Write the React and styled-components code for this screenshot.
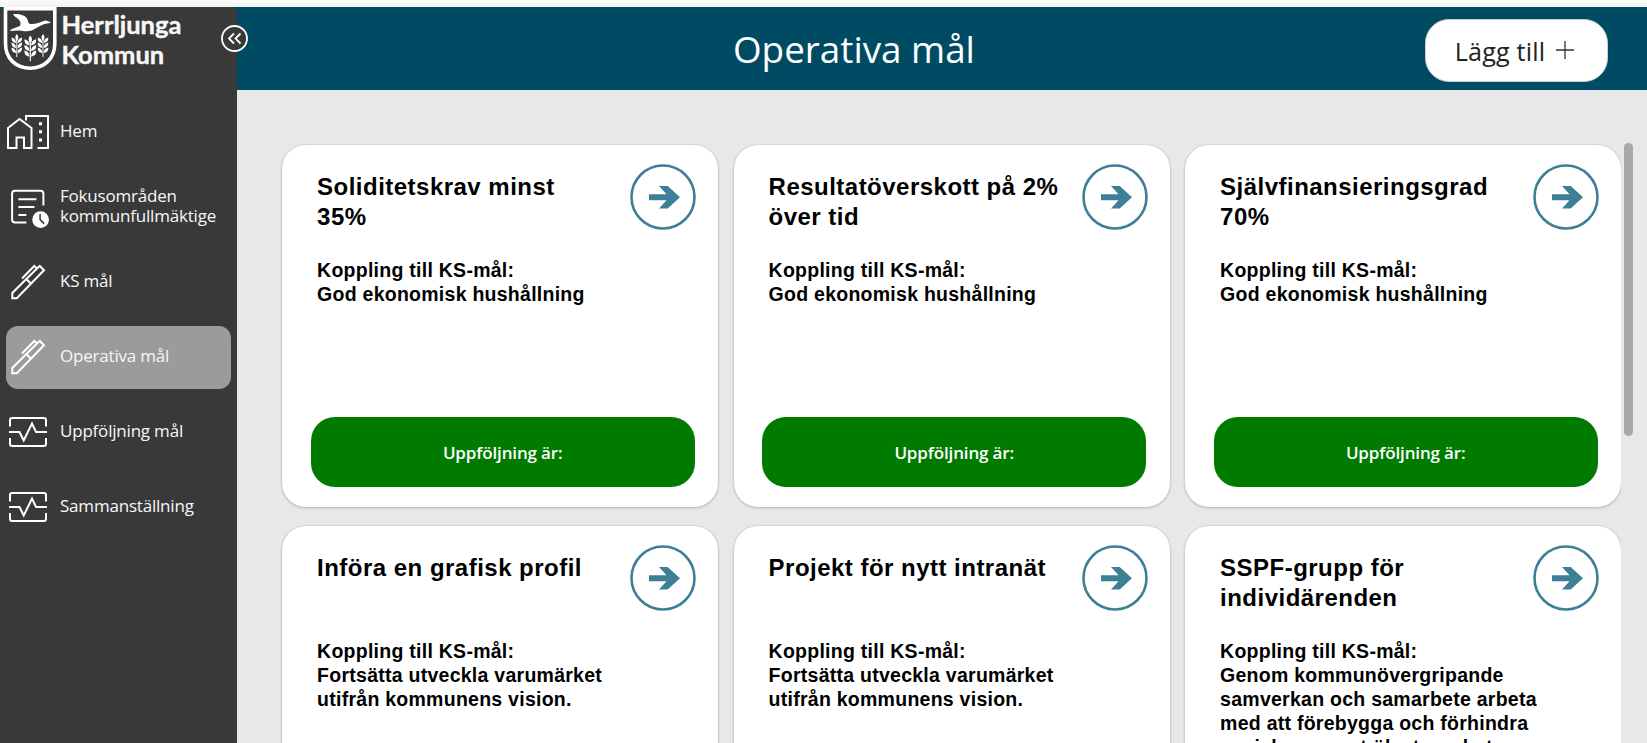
import React from "react";
import styled, { createGlobalStyle } from "styled-components";

const Global = createGlobalStyle`
  * { box-sizing: border-box; }
  html, body { margin: 0; padding: 0; overflow: hidden; }
`;
const Page = styled.div`
  width: 100vw; height: 100vh; overflow: hidden;
  display: flex; flex-direction: column;
  font-family: "Open Sans", sans-serif; background: #e8e8e8;
`;
const TopStrip = styled.div`
  height: 7px; flex: none; background: linear-gradient(#fafafa, #f3f3f3);
`;
const Body = styled.div`
  flex: 1; min-height: 0; display: flex;
  background: linear-gradient(#004b64 0 83px, #e8e8e8 83px);
`;
const Sidebar = styled.aside`
  position: relative; width: 237px; flex: none; background: #393939;
  border-radius: 6px 6px 0 0; color: #fff; display: flex; flex-direction: column;
`;
const Brand = styled.div`
  display: flex; height: 94px; padding-left: 3px; gap: 4.5px;
  svg { flex: none; }
`;
const BrandName = styled.div`
  font: 700 25.5px/30px Lato, sans-serif; padding-top: 2px; color: #f7f7f7; white-space: nowrap;
  -webkit-text-stroke: 0.4px #f7f7f7;
`;
const Collapse = styled.button`
  position: absolute; left: 221px; top: 18px; width: 27px; height: 27px; padding: 0;
  border: 0; background: none; display: block;
`;
const Nav = styled.nav`
  display: flex; flex-direction: column; gap: 12px; padding: 0 6px;
`;
const NavItem = styled.a`
  height: 63px; border-radius: 12px; display: flex; align-items: center;
  background: ${(p) => (p.$active ? "#9b9b9b" : "transparent")};
  color: #f7f7f7; font-size: 17px; line-height: 20px; letter-spacing: -0.2px;
  svg { flex: none; width: 54px; height: 63px; }
  span { padding-bottom: 3px; }
`;
const Main = styled.main`flex: 1; min-width: 0; display: flex; flex-direction: column;`;
const Header = styled.header`
  height: 83px; flex: none; padding: 0 39px 0 45px;
  display: flex; align-items: center; justify-content: space-between;
`;
const Title = styled.h1`
  margin: 0 0 0 451px; color: #fff; font-weight: 400; font-size: 36.8px; line-height: 50px;
`;
const AddButton = styled.button`
  width: 183px; height: 63px; border-radius: 24px; border: 1px solid #ccc;
  background: #fff; color: #222; font: 400 25.2px/32px "Open Sans", sans-serif; white-space: nowrap;
  display: flex; align-items: center; justify-content: center; gap: 10px; padding: 0 3px 0 0; margin-top: 3px;
  span { padding-top: 2px; letter-spacing: 0.15px; }
`;
const Content = styled.section`
  flex: 1; min-height: 0; display: flex; padding: 53px 14px 0 45px; gap: 3px;
`;
const Gallery = styled.div`
  flex: none; width: 1339px; overflow: hidden; padding-top: 2px;
  margin-left: -2px; padding-left: 2px; box-sizing: content-box;
  display: grid; grid-template-columns: repeat(3, 436px); column-gap: 15.5px; row-gap: 19px;
  grid-auto-rows: 362px;
`;
const ScrollThumb = styled.div`
  width: 9px; height: 293px; border-radius: 5px; background: #a9a9a9;
`;
const Card = styled.article`
  background: #fff; border-radius: 24px; padding: 19px 22px 19px 28.7px; overflow: hidden;
  box-shadow: 0 0 2px rgba(0,0,0,.15), 0 1px 3px rgba(0,0,0,.2);
  display: flex; flex-direction: column;
  font-family: "Liberation Sans", Arial, sans-serif; color: #000;
`;
const CardTop = styled.div`
  display: flex; justify-content: space-between; height: 92px; padding-left: 6.4px;
  svg { flex: none; }
`;
const CardTitle = styled.h2`
  margin: 0; padding-top: 8px; width: 300px; font-size: 24px; line-height: 30px; font-weight: 700;
  letter-spacing: 0.48px; white-space: pre-line;
`;
const CardText = styled.p`
  margin: 0; padding: 2px 0 0 6.4px; height: 161px; font-size: 19.5px; line-height: 24px; font-weight: 700;
  white-space: pre-line; letter-spacing: 0.26px;
`;
const Status = styled.div`
  height: 70px; flex: none; width: 384px; border-radius: 24px; background: #007b00; color: #fff;
  display: flex; align-items: center; justify-content: center; padding-top: 2px;
  font: 600 17px/24px "Open Sans", sans-serif; letter-spacing: -0.15px;
`;

const Sprig = ({ x, y }) => (
  <g transform={`translate(${x} ${y})`} fill="#fff">
    <path d="M0 -1 C2 1 2 4 0 6 C-2 4 -2 1 0 -1Z" />
    {[4, 9, 14].map((t) => (
      <g key={t}>
        <path d={`M-.7 ${t + 4} C-4.5 ${t + 3.5} -5.5 ${t + 1} -5.2 ${t - 1.5} C-2.5 ${t - 1} -.7 ${t + 1} -.7 ${t + 4}Z`} />
        <path d={`M.7 ${t + 4} C4.5 ${t + 3.5} 5.5 ${t + 1} 5.2 ${t - 1.5} C2.5 ${t - 1} .7 ${t + 1} .7 ${t + 4}Z`} />
      </g>
    ))}
    <rect x="-.5" y="5" width="1" height="17" />
  </g>
);
const Shield = () => (
  <svg width="54" height="64" viewBox="3 7 54 64">
    <path d="M5.5 8.7 H54.8 V43.5 C54.8 59 44 68.2 30.2 68.2 C16.3 68.2 5.5 59 5.5 43.5Z" fill="none" stroke="#fff" strokeWidth="3.6" />
    <path d="M13 14.2 C18 13.3 25 15 27 18.5 C28.5 21 27.5 23.3 30.5 24 C35 24.5 40 22 44.5 20.7 C46.5 20 48.5 21.5 51 22.6 C48 24 46.2 23.5 44.5 24 C38 26 34 31.2 26.5 31.3 C23.5 31.5 22 30.3 19 30.5 L9.5 31 C12 28.4 15.5 28 19.5 26.3 C21.5 24.5 20.5 21.7 18.5 19.3 C16.5 17.3 14 16.7 13 14.2Z" fill="#fff" />
    <Sprig x={16.8} y={35} /><Sprig x={43} y={35} />
    <g transform="translate(30.3 36) scale(1.12) translate(-30.3 -36)"><Sprig x={30.3} y={36.5} /></g>
  </svg>
);
const icons = {
  home: <g transform="translate(0 -3)">
    <path d="M2 30 L13.5 21 L25.5 30 V50 H18 V39.5 H10.5 V50 H2Z" />
    <path d="M20 22.5 V18 H42 V50 H31.5" />
    <path d="M33 25.8 h3 M33 33.7 h3 M33 42 h3" strokeWidth="3" />
  </g>,
  focus: <g transform="translate(-0.6 -1.4)">
    <path d="M21 48 H9.5 Q6.7 48 6.7 45 V19 Q6.7 16.2 9.5 16.2 H35 Q38 16.2 38 19 V31" />
    <path d="M13 24.6 H31 M13 32.3 H29 M13 40.3 H21" />
    <circle cx="35.2" cy="45" r="8.4" fill="#fff" stroke="none" />
    <path d="M34.7 39.5 V45 L38.7 49" stroke="#393939" strokeWidth="1.5" />
  </g>,
  pen: <>
    <path d="M6.3 47.3 V42 L31 17.5 L33.8 15 L38 19.3 L10.8 47.3Z" />
    <path d="M16 27.5 L28.3 15 L31.2 17.8 M20.8 28.5 L25 32.7" />
  </>,
  pulse: <g transform="translate(0 -1)">
    <path d="M4 26.5 V20 Q4 18 6 18 H38 Q40 18 40 20 V26.5 M4 38 V44 Q4 46 6 46 H38 Q40 46 40 44 V38" />
    <path d="M3 32 H13.5 L17.7 40.5 L26 23.5 L30 32 H41" />
  </g>,
};
const NavIcon = ({ name }) => (
  <svg viewBox="0 0 54 63" fill="none" stroke="#fff" strokeWidth="2">{icons[name]}</svg>
);
const Arrow = () => (
  <svg width="66" height="66" viewBox="0 0 66 66">
    <circle cx="33" cy="33" r="31.5" fill="none" stroke="#3d7f96" strokeWidth="2.6" />
    <path d="M19 30.2 H36.5 L29 22 H37.7 L50 33.3 L37.7 44.6 H29 L36.5 36.2 H19Z" fill="#3d7f96" />
  </svg>
);
const nav = [
  ["home", "Hem"], ["focus", "Fokusområden kommunfullmäktige"], ["pen", "KS mål"],
  ["pen", "Operativa mål"], ["pulse", "Uppföljning mål"], ["pulse", "Sammanställning"],
];
const cards = [
  ["Soliditetskrav minst\n35%", "God ekonomisk hushållning"],
  ["Resultatöverskott på 2%\növer tid", "God ekonomisk hushållning"],
  ["Självfinansieringsgrad\n70%", "God ekonomisk hushållning"],
  ["Införa en grafisk profil", "Fortsätta utveckla varumärket\nutifrån kommunens vision."],
  ["Projekt för nytt intranät", "Fortsätta utveckla varumärket\nutifrån kommunens vision."],
  ["SSPF-grupp för\nindividärenden", "Genom kommunövergripande\nsamverkan och samarbete arbeta\nmed att förebygga och förhindra\nsocial oro samt öka trygghet"],
];

export default function App() {
  return (
    <Page>
      <Global />
      <TopStrip />
      <Body>
        <Sidebar>
          <Brand><Shield /><BrandName>Herrljunga<br />Kommun</BrandName></Brand>
          <Collapse aria-label="Dölj meny">
            <svg width="27" height="27" viewBox="0 0 27 27" fill="none" stroke="#fff" strokeWidth="1.8">
              <circle cx="13.5" cy="13.5" r="12.5" fill="#393939" />
              <path d="M13 8.5 L8 13.5 L13 18.5 M19.5 8.5 L14.5 13.5 L19.5 18.5" />
            </svg>
          </Collapse>
          <Nav>
            {nav.map(([icon, label]) => (
              <NavItem key={label} $active={label === "Operativa mål"}>
                <NavIcon name={icon} /><span>{label}</span>
              </NavItem>
            ))}
          </Nav>
        </Sidebar>
        <Main>
          <Header>
            <Title>Operativa mål</Title>
            <AddButton>
              <span>Lägg till</span>
              <svg width="20" height="20" viewBox="0 0 20 20" stroke="#333" strokeWidth="1.3"><path d="M10 1 V19 M1 10 H19" /></svg>
            </AddButton>
          </Header>
          <Content>
            <Gallery>
              {cards.map(([title, goal]) => (
                <Card key={title}>
                  <CardTop><CardTitle>{title}</CardTitle><Arrow /></CardTop>
                  <CardText>{"Koppling till KS-mål:\n" + goal}</CardText>
                  <Status>Uppföljning är:</Status>
                </Card>
              ))}
            </Gallery>
            <ScrollThumb />
          </Content>
        </Main>
      </Body>
    </Page>
  );
}
